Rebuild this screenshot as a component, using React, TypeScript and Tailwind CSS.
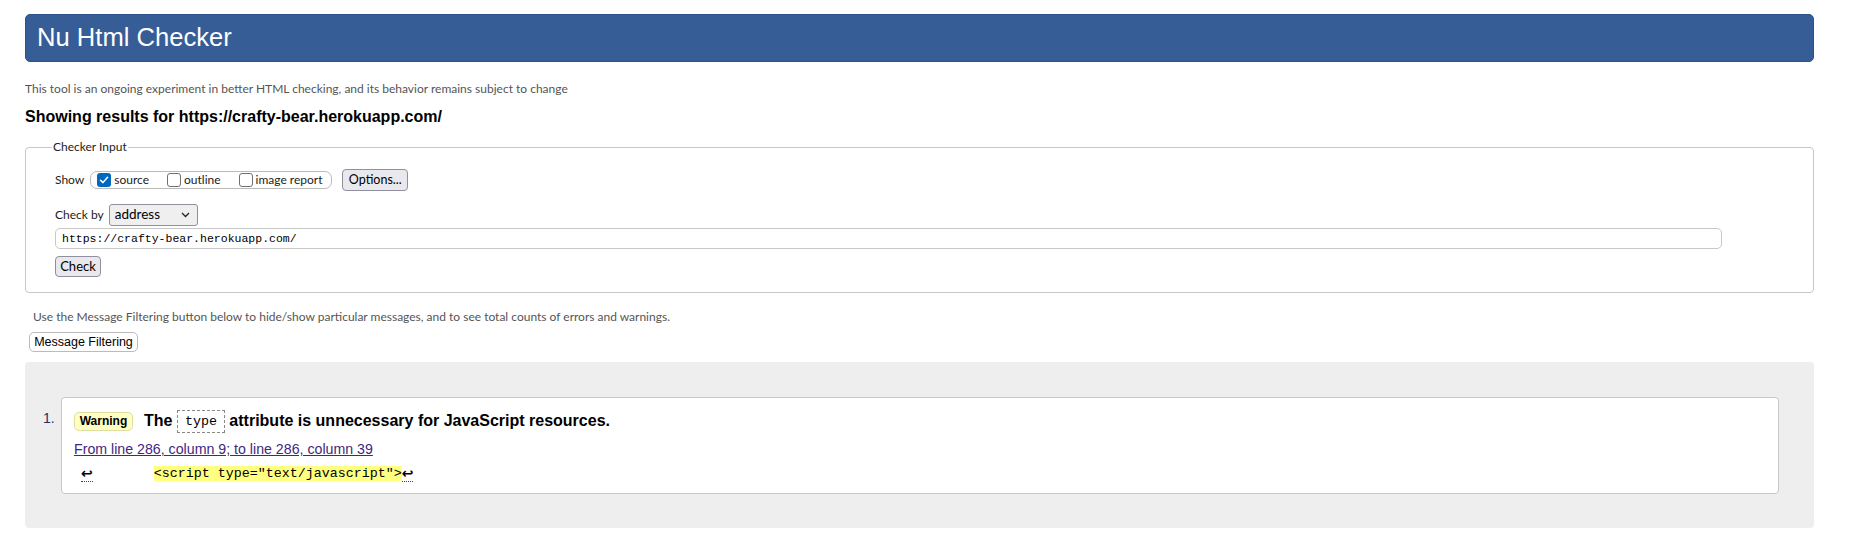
import React from "react"

const ui = "font-['Lato','Open_Sans',sans-serif]"
const arial = "font-['Liberation_Sans',Arial,sans-serif]"
const mono = "font-['Liberation_Mono','Courier_New',monospace]"

function CheckBox({ checked }: { checked?: boolean }) {
    if (checked) {
        return (
            <span className="flex h-[14px] w-[14px] shrink-0 items-center justify-center rounded-[3px] bg-[#0067c0]">
                <svg width="10" height="10" viewBox="0 0 10 10" fill="none">
                    <path d="M1.5 5.2 L4 7.6 L8.6 2.2" stroke="white" strokeWidth="1.5" strokeLinecap="round" strokeLinejoin="round" />
                </svg>
            </span>
        )
    }
    return <span className="block h-[14px] w-[14px] shrink-0 rounded-[3px] border-[1.5px] border-[#707070] bg-white" />
}

function Btn({ children, className = "" }: { children: React.ReactNode; className?: string }) {
    return (
        <span
            className={`flex items-center justify-center rounded-[4px] border border-[#8f8f9d] bg-[#e9e9ed] text-[12.5px] leading-none text-black ${ui} ${className}`}
        >
            {children}
        </span>
    )
}

export default function App() {
    return (
        <div className={`min-h-[539px] bg-white pl-[25px] pr-[40px] pt-[14px] text-[#222] ${arial}`}>
            <header className="flex h-[48px] items-center rounded-[5px] border border-[#2d5189] bg-[#365d95] pl-[11px]">
                <h1 className="text-[25.6px] leading-none text-white">Nu Html Checker</h1>
            </header>

            <p className={`mt-[19px] text-[12px] leading-[16px] text-[#555] ${ui}`}>
                This tool is an ongoing experiment in better HTML checking, and its behavior remains subject to change
            </p>

            <h2 className="mt-[11px] text-[16px] font-bold leading-[18px] text-black">
                Showing results for https://crafty-bear.herokuapp.com/
            </h2>

            <fieldset className="mt-[14px] rounded-[4px] border border-[#c8c8c8] pb-[15px] pl-[29px] pr-[91px]">
                <legend className={`-ml-[3px] px-[1px] text-[12px] leading-[14px] text-[#222] ${ui}`}>Checker Input</legend>

                <div className={`mt-[15px] flex h-[22px] items-center text-[12px] ${ui}`}>
                    <span>Show</span>
                    <div className="ml-[6px] flex h-[18px] w-[242px] items-center rounded-[7px] border border-[#bbb] pl-[6px]">
                        <CheckBox checked />
                        <span className="ml-[3px]">source</span>
                        <span className="ml-[18px] flex">
                            <CheckBox />
                        </span>
                        <span className="ml-[3px]">outline</span>
                        <span className="ml-[18px] flex">
                            <CheckBox />
                        </span>
                        <span className="ml-[3px]">image report</span>
                    </div>
                    <Btn className="ml-[10px] h-[22px] w-[66px]">Options...</Btn>
                </div>

                <div className={`mt-[13px] flex h-[22px] items-center text-[12px] ${ui}`}>
                    <span>Check by</span>
                    <div className="ml-[5px] flex h-[22px] w-[89px] items-center justify-between rounded-[3px] border border-[#8f8f9d] bg-[#efefef] pl-[5px] pr-[7px]">
                        <span className="text-[13.5px] leading-none text-black">address</span>
                        <svg width="9" height="6" viewBox="0 0 9 6" fill="none">
                            <path d="M1 1 L4.5 4.5 L8 1" stroke="#222" strokeWidth="1.3" />
                        </svg>
                    </div>
                </div>

                <div className="mt-[2px] flex h-[21px] w-full items-center rounded-[5px] border border-[#c8c8c8] bg-white pl-[6px]">
                    <span className={`text-[11.5px] leading-none text-black ${mono}`}>https://crafty-bear.herokuapp.com/</span>
                </div>

                <div className="mt-[7px] flex">
                    <Btn className="h-[21px] w-[46px] text-[13px]">Check</Btn>
                </div>
            </fieldset>

            <p className={`ml-[8px] mt-[16px] text-[12px] leading-[16px] text-[#555] ${ui}`}>
                Use the Message Filtering button below to hide/show particular messages, and to see total counts of errors and
                warnings.
            </p>

            <div className="ml-[4px] mt-[7px] flex">
                <span className="flex h-[20px] w-[109px] items-center justify-center rounded-[5px] border border-[#bbb] bg-white text-[12.5px] leading-none text-black">
                    Message Filtering
                </span>
            </div>

            <div className="mt-[10px] flex rounded-[4px] bg-[#eeeeee] pb-[34px] pl-[18px] pr-[35px] pt-[35px]">
                <span className="mt-[13px] w-[18px] text-[14px] leading-[16px] text-[#1f2d6b]">1.</span>
                <div className="h-[97px] flex-1 rounded-[4px] border border-[#c8c8c8] bg-white pl-[12px] pt-[11px]">
                    <div className="flex h-[24px] items-center">
                        <span className="flex h-[19px] w-[59px] items-center justify-center rounded-[5px] border border-[#dede9e] bg-[#ffffc4] text-[12px] font-bold leading-none text-black">
                            Warning
                        </span>
                        <p className="ml-[11px] text-[16px] font-bold leading-[24px] text-black">
                            The{" "}
                            <code
                                className={`inline-block h-[23px] border border-dashed border-[#888] px-[7px] align-middle text-[13.33px] font-normal leading-[21px] ${mono}`}
                            >
                                type
                            </code>{" "}
                            attribute is unnecessary for JavaScript resources.
                        </p>
                    </div>

                    <a className="mt-[8px] block w-max text-[14.2px] leading-[17px] text-[#41287f] underline" href="#">
                        From line 286, column 9; to line 286, column 39
                    </a>

                    <div className="mt-[8px] flex h-[18px] items-start">
                        <span className="ml-[7px] border-b border-dotted border-[#444] font-['DejaVu_Sans',sans-serif] text-[14px] font-bold leading-[15px] text-black">
                            ↩
                        </span>
                        <code className={`ml-[61px] bg-[#ffff80] text-[13.33px] leading-[15px] text-black ${mono}`}>
                            &lt;script type="text/javascript"&gt;
                        </code>
                        <span className="border-b border-dotted border-[#444] font-['DejaVu_Sans',sans-serif] text-[14px] font-bold leading-[15px] text-black">
                            ↩
                        </span>
                    </div>
                </div>
            </div>
        </div>
    )
}
